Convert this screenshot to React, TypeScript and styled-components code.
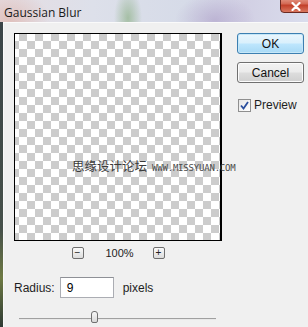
import React from 'react';
import styled, { createGlobalStyle } from 'styled-components';

const GlobalStyle = createGlobalStyle`
  html, body {
    margin: 0;
    padding: 0;
    background: #f0f0f0;
  }
  body {
    font-family: "Liberation Sans", "DejaVu Sans", sans-serif;
  }
`;

const Frame = styled.div`
  width: 308px;
  height: 327px;
  overflow: hidden;
  display: flex;
  flex-direction: column;
  background: linear-gradient(180deg, #3a4448 0%, #46504a 70%, #6e7a44 85%, #2e3a34 100%);
`;

const TitleBar = styled.div`
  position: relative;
  height: 22px;
  flex: none;
  display: flex;
  align-items: center;
  padding-left: 4px;
  background:
    radial-gradient(ellipse 14px 30px at 128px 18px, rgba(130, 170, 120, 0.6), transparent),
    radial-gradient(ellipse 40px 26px at 215px 20px, rgba(160, 140, 190, 0.45), transparent),
    radial-gradient(ellipse 40px 30px at 10px 20px, rgba(220, 175, 165, 0.6), transparent),
    linear-gradient(90deg, #e6dde2 0%, #dde0ea 30%, #d6dbe8 60%, #d2d0e4 80%, #dadded 100%);
`;

const Title = styled.span`
  font-family: "Open Sans", "DejaVu Sans", sans-serif;
  font-size: 12px;
  color: #1a1a1a;
  margin-top: 2px;
`;

const CloseButton = styled.div`
  position: absolute;
  top: -4px;
  right: -4px;
  width: 32px;
  height: 17px;
  border: 1px solid #6b2a22;
  border-radius: 0 0 4px 4px;
  background: linear-gradient(180deg, #e8a493 0%, #d46a55 45%, #c2402a 55%, #d9775f 100%);
  display: flex;
  align-items: flex-end;
  justify-content: center;
  padding-bottom: 1px;
  box-sizing: border-box;
`;

const Body = styled.div`
  flex: 1;
  margin-left: 3px;
  border-left: 1px solid #fafafa;
  border-top: 1px solid #fafafa;
  background: #f0f0f0;
  display: flex;
  padding: 10px 0 0 10px;
  gap: 15px;
`;

const LeftColumn = styled.div`
  width: 208px;
  display: flex;
  flex-direction: column;
`;

const Preview = styled.div`
  position: relative;
  width: 208px;
  height: 208px;
  box-sizing: border-box;
  border: 1px solid #000;
  border-right-width: 2px;
  background: repeating-conic-gradient(#cccccc 0 25%, #ffffff 0 50%) -4px -1px / 16px 16px;
`;

const Watermark = styled.div`
  position: absolute;
  left: 57px;
  top: 122px;
  display: flex;
  align-items: baseline;
  gap: 5px;
  white-space: nowrap;
`;

const WatermarkCn = styled.span`
  font-family: "Noto Sans CJK SC", sans-serif;
  font-size: 12.5px;
  color: #3a3a3a;
`;

const WatermarkEn = styled.span`
  font-family: "DejaVu Sans Mono", monospace;
  font-size: 9px;
  color: #4a4a4a;
  letter-spacing: -0.2px;
`;

const ZoomRow = styled.div`
  display: flex;
  justify-content: center;
  align-items: center;
  gap: 22px;
  margin-top: 6px;
  height: 12px;
`;

const ZoomButton = styled.div`
  width: 12px;
  height: 12px;
  box-sizing: border-box;
  border: 1px solid #6f6f6f;
  border-radius: 2px;
  background: linear-gradient(180deg, #fafafa, #dcdcdc);
  display: flex;
  align-items: center;
  justify-content: center;
  font-size: 10px;
  line-height: 1;
  color: #222;
`;

const ZoomText = styled.span`
  font-size: 11px;
  color: #222;
  width: 25px;
  text-align: center;
`;

const RadiusRow = styled.div`
  display: flex;
  align-items: center;
  margin-top: 18px;
  height: 21px;
`;

const Label = styled.span`
  font-size: 12px;
  color: #1e1e1e;
`;

const RadiusInput = styled.div`
  width: 54px;
  height: 21px;
  box-sizing: border-box;
  margin-left: 5px;
  margin-right: 9px;
  border: 1px solid #abadb3;
  border-top-color: #8e9096;
  background: #fff;
  display: flex;
  align-items: center;
  padding-left: 6px;
  font-size: 12px;
  color: #000;
`;

const Slider = styled.div`
  position: relative;
  margin: 13px 0 0 5px;
  width: 197px;
  height: 14px;
`;

const Track = styled.div`
  position: absolute;
  left: 0;
  right: 0;
  top: 7px;
  height: 1px;
  background: #a0a0a0;
  border-bottom: 1px solid #e8e8e8;
`;

const Thumb = styled.div`
  position: absolute;
  left: 72px;
  top: 0;
  width: 7px;
  height: 12px;
  box-sizing: border-box;
  border: 1px solid #707070;
  border-radius: 3px 3px 2px 2px;
  background: linear-gradient(180deg, #f8f8f8, #d8d8d8);
`;

const RightColumn = styled.div`
  width: 67px;
  display: flex;
  flex-direction: column;
`;

const Button = styled.div<{ $default?: boolean }>`
  height: 21px;
  box-sizing: border-box;
  border: 1px solid ${({ $default }) => ($default ? '#3c7fb1' : '#707070')};
  border-radius: 3px;
  background: ${({ $default }) =>
    $default
      ? 'linear-gradient(180deg, #eaf6fd 0%, #d9f0fc 48%, #bee6fd 52%, #a7d9f5 100%)'
      : 'linear-gradient(180deg, #f2f2f2 0%, #ebebeb 48%, #dddddd 52%, #cfcfcf 100%)'};
  box-shadow: ${({ $default }) => ($default ? 'inset 0 0 0 1px #c6e7f8' : 'inset 0 0 0 1px #fcfcfc')};
  display: flex;
  align-items: center;
  justify-content: center;
  font-size: 12px;
  color: #111;
  margin-bottom: 8px;
`;

const CheckRow = styled.div`
  display: flex;
  align-items: center;
  gap: 3px;
  margin-top: 7px;
  margin-left: 1px;
`;

const CheckBox = styled.div`
  width: 13px;
  height: 13px;
  box-sizing: border-box;
  border: 1px solid #8f8f8f;
  background: linear-gradient(135deg, #e6e6e6, #ffffff);
  display: flex;
  align-items: center;
  justify-content: center;
`;

export default function App() {
  return (
    <>
      <GlobalStyle />
      <Frame>
        <TitleBar>
          <Title>Gaussian Blur</Title>
          <CloseButton>
            <svg width="10" height="9" viewBox="0 0 10 9">
              <path d="M1.5 1 L8.5 8 M8.5 1 L1.5 8" stroke="#fff" strokeWidth="2.2" strokeLinecap="round" />
            </svg>
          </CloseButton>
        </TitleBar>
        <Body>
          <LeftColumn>
            <Preview>
              <Watermark>
                <WatermarkCn>思缘设计论坛</WatermarkCn>
                <WatermarkEn>WWW.MISSYUAN.COM</WatermarkEn>
              </Watermark>
            </Preview>
            <ZoomRow>
              <ZoomButton>−</ZoomButton>
              <ZoomText>100%</ZoomText>
              <ZoomButton>+</ZoomButton>
            </ZoomRow>
            <RadiusRow>
              <Label>Radius:</Label>
              <RadiusInput>9</RadiusInput>
              <Label>pixels</Label>
            </RadiusRow>
            <Slider>
              <Track />
              <Thumb />
            </Slider>
          </LeftColumn>
          <RightColumn>
            <Button $default>OK</Button>
            <Button>Cancel</Button>
            <CheckRow>
              <CheckBox>
                <svg width="9" height="9" viewBox="0 0 9 9">
                  <path d="M1 4.5 L3.5 7.5 L8 1" stroke="#2b4f9e" strokeWidth="1.8" fill="none" />
                </svg>
              </CheckBox>
              <Label>Preview</Label>
            </CheckRow>
          </RightColumn>
        </Body>
      </Frame>
    </>
  );
}
